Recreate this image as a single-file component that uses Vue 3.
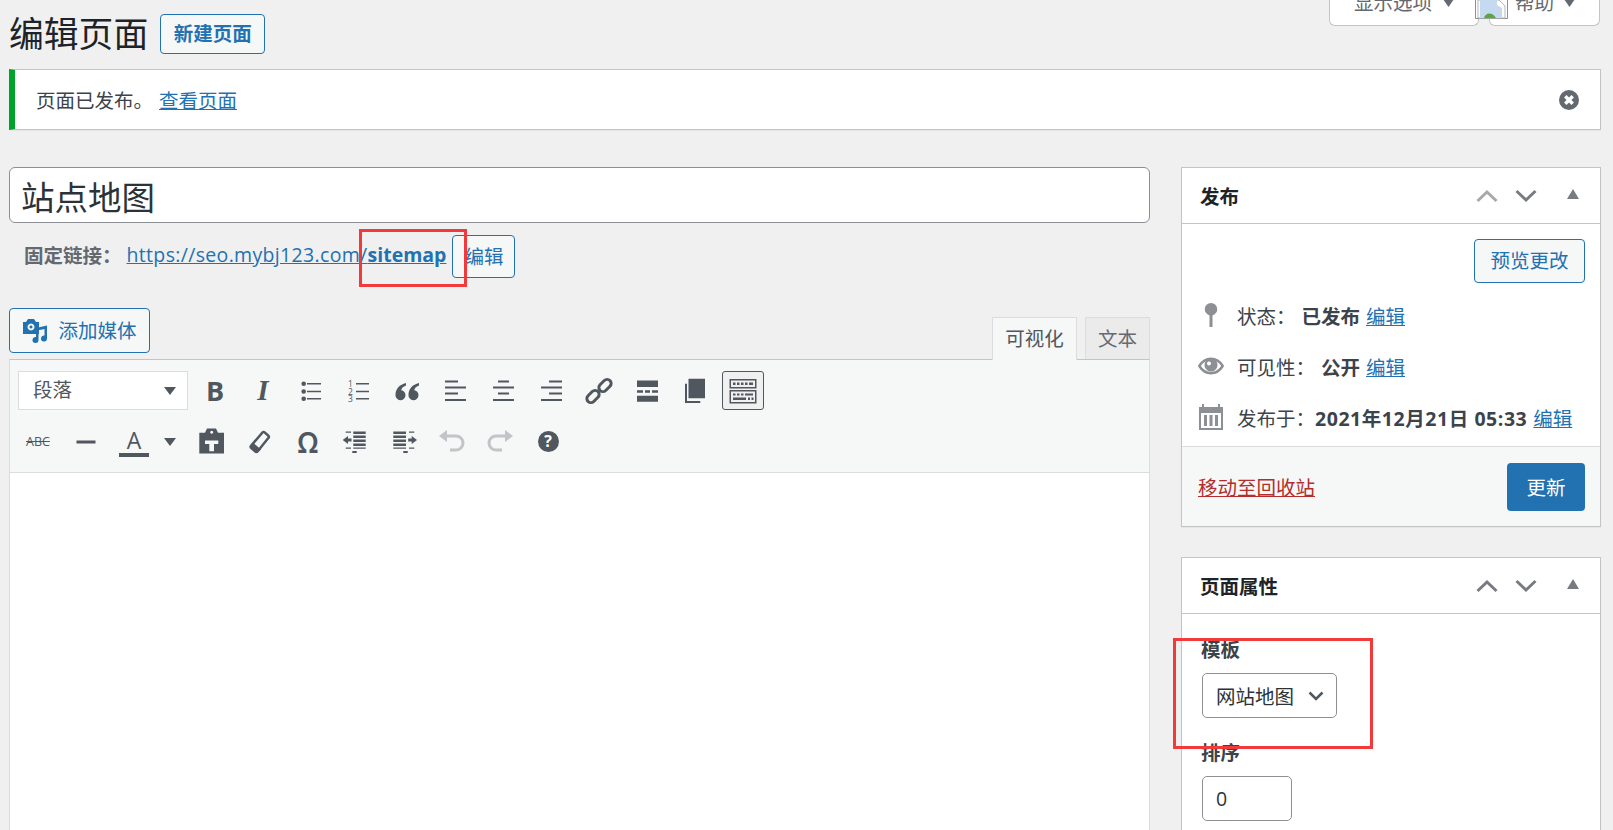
<script setup>
const statusRows = [
  { icon: 'pin', label: '状态：', value: '已发布', cls: 'val-gap' },
  { icon: 'eye', label: '可见性：', value: '公开', cls: 'val-gap' },
  { icon: 'cal', label: '发布于：', value: '2021年12月21日 05:33', cls: 'val-date' }
]
</script>

<template>
  <div class="page">
    <div class="screen-links">
      <div class="screen-tab tab-options">
        显示选项
        <svg class="tab-tri" viewBox="0 0 14 10"><path d="M0 0h14L7 10z" /></svg>
      </div>
      <div class="screen-tab tab-help">
        <svg class="broken" viewBox="0 0 33 19">
          <path class="broken-frame" d="M.5 0v18.500h32V0" />
          <path class="broken-paper" d="M3 0h21l6 6v12H3z" />
          <path class="broken-sky" d="M5 0h17v5l5 3v9H5z" />
          <path class="broken-hill" d="M9 18c1-5 8-7 12 0z" />
        </svg>
        帮助
        <svg class="tab-tri" viewBox="0 0 14 10"><path d="M0 0h14L7 10z" /></svg>
      </div>
    </div>

    <div class="head">
      <h1>编辑页面</h1>
      <a class="btn btn-new">新建页面</a>
    </div>

    <div class="notice">
      <span>页面已发布。</span>
      <a class="link notice-link">查看页面</a>
      <svg class="notice-close" viewBox="0 0 20 20">
        <circle cx="10" cy="10" r="10" />
        <path d="M6.300 6.300l7.400 7.400M13.700 6.300l-7.400 7.400" />
      </svg>
    </div>

    <div class="columns">
      <div class="main">
        <input class="title-input" value="站点地图" readonly />

        <div class="permalink">
          <b>固定链接：</b>
          <a class="link perma-url">https://seo.mybj123.com/<b>sitemap</b></a>
          <a class="btn btn-edit">编辑</a>
        </div>

        <div class="media-row">
          <a class="btn btn-media">
            <svg class="media-ico" viewBox="0 0 26 24">
              <path fill-rule="evenodd" d="M1 3h3l2-3h6l2 3h3v12H1zM9 4.500a3.500 3.500 0 1 0 .01 0zM9 6.500a1.500 1.500 0 1 1-.01 0z" />
              <path d="M14 9l11-2.500v13a3 3 0 1 1-2.500-3V10l-6 1.300V21a3 3 0 1 1-2.500-3z" />
            </svg>
            添加媒体
          </a>
          <div class="editor-tabs">
            <div class="etab etab-on">可视化</div>
            <div class="etab etab-text">文本</div>
          </div>
        </div>

        <div class="editor">
          <div class="toolbar">
            <div class="tb-row">
              <div class="format">
                <span>段落</span>
                <svg class="tri" viewBox="0 0 12 8"><path d="M0 0h12L6 8z" /></svg>
              </div>
              <div class="tb-btn"><span class="glyph-b">B</span></div>
              <div class="tb-btn"><span class="glyph-i">I</span></div>
              <div class="tb-btn">
                <svg class="ico" viewBox="0 0 30 30">
                  <circle cx="7.700" cy="7.700" r="2.300" /><circle cx="7.700" cy="15.500" r="2.300" /><circle cx="7.700" cy="22.800" r="2.300" />
                  <path d="M11 7h14v1.500H11zM11 14.700h14v1.500H11zM11 22h14v1.500H11z" />
                </svg>
              </div>
              <div class="tb-btn">
                <svg class="ico" viewBox="0 0 30 30">
                  <text x="4" y="10.500" class="ol-num">1</text><text x="4" y="18.500" class="ol-num">2</text><text x="4" y="26" class="ol-num">3</text>
                  <path d="M12 7h13v1.500H12zM12 14.700h13v1.500H12zM12 22h13v1.500H12z" />
                </svg>
              </div>
              <div class="tb-btn">
                <svg class="ico" viewBox="0 0 30 30">
                  <path d="M14 7v2.500c-3 1-4.500 3-4.800 4.700A5 5 0 1 1 3.500 19C3.500 13 7.500 8.500 14 7zM27 7v2.500c-3 1-4.500 3-4.800 4.700A5 5 0 1 1 16.500 19C16.500 13 20.500 8.500 27 7z" />
                </svg>
              </div>
              <div class="tb-btn">
                <svg class="ico" viewBox="0 0 30 30"><path d="M5 4.500h13v2H5zM5 10.500h21v2H5zM5 16.500h13v2H5zM5 23h21v2H5z" /></svg>
              </div>
              <div class="tb-btn">
                <svg class="ico" viewBox="0 0 30 30"><path d="M10 4.500h11v2H10zM5 10.500h21v2H5zM10 16.500h11v2H10zM5 23h21v2H5z" /></svg>
              </div>
              <div class="tb-btn">
                <svg class="ico" viewBox="0 0 30 30"><path d="M13 4.500h13v2H13zM5 10.500h21v2H5zM13 16.500h13v2H13zM5 23h21v2H5z" /></svg>
              </div>
              <div class="tb-btn">
                <svg class="ico" viewBox="0 0 30 30">
                  <g class="chain">
                    <rect x="2" y="16.500" width="14" height="8" rx="4" transform="rotate(-45 9 20.500)" />
                    <rect x="14" y="5.500" width="14" height="8" rx="4" transform="rotate(-45 21 9.500)" />
                  </g>
                </svg>
              </div>
              <div class="tb-btn">
                <svg class="ico" viewBox="0 0 30 30">
                  <path d="M5 4.500h21V11H5zM5 14.300h6v2.400H5zM13 14.300h5v2.400h-5zM20 14.300h6v2.400h-6zM5 19.700h21v6H5z" />
                </svg>
              </div>
              <div class="tb-btn">
                <svg class="ico" viewBox="0 0 30 30">
                  <path d="M8.500 2.700H25v19.600H8.500zM5 7.700h2V25h13.300v2H5z" />
                </svg>
              </div>
              <div class="tb-btn tb-on">
                <svg class="ico" viewBox="0 0 30 30">
                  <path fill-rule="evenodd" d="M1.500 3h27v9.500h-27zM3 4.500v6.500h24V4.500zM1.500 14h27v13.500h-27zM3 15.500V26h24V15.500z" />
                  <path d="M5 6.500h2.500v2.500H5zM9 6.500h2.500v2.500H9zM13 6.500h2.500v2.500H13zM17 6.500h2.500v2.500H17zM21 6.500h4v2.500h-4zM5 17.500h2.500v2H5zM9 17.500h2.500v2H9zM13 17.500h2.500v2H13zM17 17.500h8v2h-8zM5 21.500h13v2.500H5zM20 21.500h2v2.500h-2zM23.500 21.500h2v2.500h-2z" />
                </svg>
              </div>
            </div>

            <div class="tb-row row-2">
              <div class="tb-btn"><span class="glyph-abc">ABC</span></div>
              <div class="tb-btn">
                <svg class="ico" viewBox="0 0 30 30"><path d="M5.500 13.500h19v3h-19z" /></svg>
              </div>
              <div class="tb-btn">
                <span class="glyph-a">A</span>
              </div>
              <div class="tb-arrow">
                <svg class="tri" viewBox="0 0 12 8"><path d="M0 0h12L6 8z" /></svg>
              </div>
              <div class="tb-btn">
                <svg class="ico" viewBox="0 0 30 30">
                  <path fill-rule="evenodd" d="M2.300 5.800H8L10 1.500h9l2 4.300h6v20.700H2.300zM8 13.500V17h4.300v7.200H17V17h4.300v-3.500zM14.700 3.700a1.500 1.500 0 1 0 .01 0z" />
                </svg>
              </div>
              <div class="tb-btn">
                <svg class="ico" viewBox="0 0 30 30">
                  <path class="eraser" d="M17.500 5.500c.6-.7 1.500-.7 2.100-.1l3.800 3.400c.6.500.7 1.400.1 2L12.500 24.500c-.6.700-1.500.7-2.100.1l-4.300-3.800c-.6-.5-.7-1.400-.1-2z" />
                  <path d="M6 20l3-3.500 7 6-3.500 3-2 .3z" />
                </svg>
              </div>
              <div class="tb-btn"><span class="glyph-omega">Ω</span></div>
              <div class="tb-btn">
                <svg class="ico" viewBox="0 0 30 30">
                  <path d="M4.700 4.500H10v1.200H4.700zM12.300 4.500h12.400V7H12.300zM12.300 8.500h12.400V11H12.300zM12.300 12.500h12.400V15H12.300zM12.300 16.500h12.400V19H12.300zM12.300 20.500h12.400v1.200H12.300zM4.700 20.500H10v1.200H4.700zM11.300 24h4.400v2h-4.400zM1.700 13L7 9v2.500h3.500v3H7V17z" />
                </svg>
              </div>
              <div class="tb-btn">
                <svg class="ico" viewBox="0 0 30 30">
                  <path d="M20 4.500h5.300v1.200H20zM4.300 4.500H17V7H4.300zM4.300 8.500H17V11H4.300zM4.300 12.500H17V15H4.300zM4.300 16.500H17V19H4.300zM4.300 20.500H17v1.200H4.300zM20 20.500h5.300v1.200H20zM14.300 24h4.400v2h-4.400zM28 13l-5.300-4v2.500h-3.500v3h3.500V17z" />
                </svg>
              </div>
              <div class="tb-btn">
                <svg class="ico ico-off" viewBox="0 0 30 30">
                  <path d="M2 9l8-6v12z" /><path class="hist" d="M9 9h10a7 7 0 0 1 0 14h-6" />
                </svg>
              </div>
              <div class="tb-btn">
                <svg class="ico ico-off" viewBox="0 0 30 30">
                  <path d="M28 9l-8-6v12z" /><path class="hist" d="M21 9H11a7 7 0 0 0 0 14h6" />
                </svg>
              </div>
              <div class="tb-btn"><span class="glyph-help">?</span></div>
            </div>
          </div>
          <div class="editor-body"></div>
        </div>
      </div>

      <div class="side">
        <div class="box">
          <div class="box-head">
            <h2>发布</h2>
            <svg class="chev chev-off" viewBox="0 0 22 14"><path d="M1.500 12L11 3l9.500 9" /></svg>
            <svg class="chev" viewBox="0 0 22 14"><path d="M1.500 2l9.500 9 9.500-9" /></svg>
            <svg class="box-tri" viewBox="0 0 12 10"><path d="M6 0l6 10H0z" /></svg>
          </div>
          <div class="preview-row"><a class="btn btn-preview">预览更改</a></div>
          <div v-for="row in statusRows" :key="row.icon" class="status-row">
            <svg v-if="row.icon === 'pin'" class="st-ico" viewBox="0 0 26 26">
              <path d="M13 1a6.300 6.300 0 0 1 1.500 12.400V25h-3V13.400A6.300 6.300 0 0 1 13 1z" />
            </svg>
            <svg v-else-if="row.icon === 'eye'" class="st-ico" viewBox="0 0 26 26">
              <path class="eye-line" d="M1.300 13C3.800 9 8 5.800 13 5.800S22.200 9 24.700 13C22.200 17 18 20.200 13 20.200S3.800 17 1.300 13z" />
              <path fill-rule="evenodd" d="M13 5.500a6.500 6.500 0 1 1-.01 0zM11 8.500a2 2 0 1 0 .01 0z" />
            </svg>
            <svg v-else class="st-ico" viewBox="0 0 26 26">
              <path fill-rule="evenodd" d="M1 3h3V0h2v3h14V0h2v3h3v23H1zM3 9v15h20V9z" />
              <path d="M6 11h3v11H6zM11.500 11h3v11h-3zM17 11h3v11h-3z" />
            </svg>
            <span>{{ row.label }}</span>
            <b :class="row.cls">{{ row.value }}</b>
            <a class="link st-edit">编辑</a>
          </div>
          <div class="box-actions">
            <a class="trash">移动至回收站</a>
            <a class="btn-primary">更新</a>
          </div>
        </div>

        <div class="box box-attrs">
          <div class="box-head">
            <h2>页面属性</h2>
            <svg class="chev" viewBox="0 0 22 14"><path d="M1.500 12L11 3l9.500 9" /></svg>
            <svg class="chev" viewBox="0 0 22 14"><path d="M1.500 2l9.500 9 9.500-9" /></svg>
            <svg class="box-tri" viewBox="0 0 12 10"><path d="M6 0l6 10H0z" /></svg>
          </div>
          <div class="attrs">
            <div class="field-label">模板</div>
            <div class="tpl-select">
              网站地图
              <svg class="tpl-chev" viewBox="0 0 16 10"><path d="M1.500 1.500L8 8l6.500-6.500" /></svg>
            </div>
            <div class="field-label label-order">排序</div>
            <input class="order-input" value="0" readonly />
          </div>
        </div>
      </div>
    </div>

    <div class="mark mark-slug"></div>
    <div class="mark mark-tpl"></div>
  </div>
</template>

<style>
html,
body {
  margin: 0;
  background: #f0f0f1;
}
</style>

<style scoped>
.page {
  position: relative;
  box-sizing: border-box;
  width: 1613px;
  height: 830px;
  overflow: hidden;
  padding: 14px 12px 0 9px;
  font-family: "Open Sans", "Noto Sans CJK SC", sans-serif;
  font-size: 19.5px;
  color: #3c434a;
  background: #f0f0f1;
}

.link {
  color: #2271b1;
  text-decoration: underline;
}

.screen-links {
  float: right;
  display: flex;
  gap: 10px;
  margin: -30px 1px 0 0;
}

.screen-tab {
  box-sizing: border-box;
  display: flex;
  align-items: center;
  position: relative;
  height: 48px;
  margin-top: -6px;
  padding-top: 10px;
  padding-bottom: 8px;
  background: #fff;
  border: 1px solid #c3c4c7;
  border-top: none;
  border-radius: 0 0 6px 6px;
  color: #646970;
  line-height: 1;
}

.tab-options {
  width: 150px;
  padding-left: 24px;
}

.tab-help {
  width: 111px;
  padding-left: 25px;
}

.tab-tri {
  width: 11px;
  height: 8px;
  fill: #646970;
}

.tab-options .tab-tri {
  margin-left: 11px;
}

.tab-help .tab-tri {
  margin-left: 10px;
}

.broken {
  position: absolute;
  left: -15px;
  top: 22px;
  width: 33px;
  height: 19px;
}

.broken-frame {
  fill: none;
  stroke: #8c8f94;
}

.broken-paper {
  fill: #fff;
  stroke: #b4b6b9;
}

.broken-sky {
  fill: #c5d9f1;
}

.broken-hill {
  fill: #5aa83c;
}

.head {
  display: flex;
  align-items: center;
  height: 40px;
}

h1 {
  margin: 0;
  font-size: 34.800px;
  font-weight: 400;
  color: #1d2327;
  line-height: 40px;
}

.btn {
  box-sizing: border-box;
  display: inline-flex;
  align-items: center;
  justify-content: center;
  border: 1px solid #2271b1;
  border-radius: 4px;
  background: #f6f7f7;
  color: #2271b1;
  line-height: 1;
}

.btn-new {
  width: 105px;
  height: 40px;
  margin-left: 12px;
  font-weight: 700;
}

.notice {
  box-sizing: border-box;
  display: flex;
  align-items: center;
  height: 61px;
  margin-top: 15px;
  padding-left: 21px;
  padding-right: 21px;
  background: #fff;
  border: 1px solid #c3c4c7;
  border-left: 6px solid #00a32a;
  box-shadow: 0 1px 1px rgba(0, 0, 0, 0.04);
}

.notice-link {
  margin-left: 6px;
}

.notice-close {
  width: 20px;
  height: 20px;
  margin-left: auto;
}

.notice-close circle {
  fill: #646970;
}

.notice-close path {
  stroke: #fff;
  stroke-width: 3.500;
  fill: none;
}

.columns {
  display: grid;
  grid-template-columns: 1141px 420px;
  gap: 31px;
  margin-top: 37px;
}

.title-input {
  box-sizing: border-box;
  display: block;
  width: 100%;
  height: 56px;
  padding: 0 11px;
  border: 1px solid #8c8f94;
  border-radius: 6px;
  background: #fff;
  font-family: inherit;
  font-size: 33.500px;
  color: #2c3338;
  outline: none;
}

.permalink {
  display: flex;
  align-items: center;
  height: 43px;
  margin-top: 12px;
  padding-left: 15px;
}

.permalink > b {
  color: #646970;
  margin-bottom: 5px;
}

.perma-url {
  margin-left: 5px;
  margin-bottom: 5px;
  letter-spacing: 0.33px;
}

.perma-url b {
  letter-spacing: 0;
}

.btn-edit {
  width: 63px;
  height: 43px;
  margin-left: 6px;
}

.media-row {
  display: flex;
  justify-content: space-between;
  height: 51px;
  margin-top: 30px;
}

.btn-media {
  width: 141px;
  height: 45px;
}

.media-ico {
  width: 26px;
  height: 24px;
  margin-right: 10px;
  fill: #2271b1;
}

.editor-tabs {
  display: flex;
  align-items: flex-end;
  gap: 8px;
  position: relative;
  z-index: 1;
}

.etab {
  box-sizing: border-box;
  display: flex;
  align-items: center;
  justify-content: center;
  height: 42px;
  padding-bottom: 3px;
  background: #ebebeb;
  border: 1px solid #dcdcde;
  border-bottom: none;
  color: #646970;
}

.etab-on {
  width: 85px;
  height: 43px;
  margin-bottom: -1px;
  background: #f6f7f7;
  color: #50575e;
}

.etab-text {
  width: 65px;
}

.editor {
  border: 1px solid #dcdcde;
  border-top-color: #c3c4c7;
  border-bottom: none;
  background: #fff;
}

.toolbar {
  box-sizing: border-box;
  height: 113px;
  padding: 11px 4px 0;
  background: #f6f7f7;
  border-bottom: 1px solid #dcdcde;
}

.editor-body {
  height: 400px;
}

.tb-row {
  display: flex;
  align-items: center;
  height: 39px;
}

.row-2 {
  margin-top: 12px;
}

.format {
  box-sizing: border-box;
  display: flex;
  align-items: center;
  justify-content: space-between;
  width: 170px;
  height: 39px;
  margin: 0 3px 0 4px;
  padding: 0 11px 0 14px;
  background: #fff;
  border: 1px solid #dcdcde;
  color: #50575e;
}

.format span {
  margin-bottom: 4px;
}

.tri {
  width: 12px;
  height: 8px;
  fill: #50575e;
}

.tb-btn {
  box-sizing: border-box;
  flex: none;
  display: flex;
  align-items: center;
  justify-content: center;
  width: 42px;
  height: 39px;
  margin: 0 3px;
  border: 1px solid transparent;
  border-radius: 3px;
  color: #50575e;
}

.tb-on {
  background: #f0f0f1;
  border-color: #50575e;
}

.tb-arrow {
  flex: none;
  display: flex;
  align-items: center;
  justify-content: center;
  width: 22px;
  margin: 0 7px 0 1px;
}

.ico {
  flex: none;
  width: 30px;
  height: 30px;
  fill: #50575e;
}

.ico-off {
  fill: #c3c4c7;
}

.hist {
  fill: none;
  stroke: #c3c4c7;
  stroke-width: 3;
}

.ol-num {
  font-family: "Open Sans", sans-serif;
  font-size: 8.500px;
}

.chain rect {
  fill: none;
  stroke: #50575e;
  stroke-width: 3;
}

.eraser {
  fill: none;
  stroke: #50575e;
  stroke-width: 2.500;
}

.glyph-b {
  font-family: "Open Sans", sans-serif;
  font-size: 27px;
  font-weight: 700;
  line-height: 1;
}

.glyph-i {
  font-family: "Liberation Serif", serif;
  font-size: 29px;
  font-weight: 700;
  font-style: italic;
  line-height: 1;
}

.glyph-abc {
  font-family: "Open Sans", sans-serif;
  font-size: 12.500px;
  text-decoration: line-through;
}

.glyph-a {
  font-family: "Open Sans", sans-serif;
  font-size: 23px;
  line-height: 26px;
  width: 30px;
  text-align: center;
  border-bottom: 4px solid #50575e;
}

.glyph-omega {
  font-family: "Noto Sans", sans-serif;
  font-size: 28px;
  font-weight: 600;
  line-height: 1;
}

.glyph-help {
  width: 21px;
  height: 21px;
  border-radius: 50%;
  background: #50575e;
  color: #fff;
  font-family: "Open Sans", sans-serif;
  font-size: 16px;
  font-weight: 700;
  line-height: 21px;
  text-align: center;
}

.box {
  background: #fff;
  border: 1px solid #c3c4c7;
  box-shadow: 0 1px 1px rgba(0, 0, 0, 0.04);
}

.box-attrs {
  margin-top: 30px;
  height: 300px;
}

.box-head {
  box-sizing: border-box;
  display: flex;
  align-items: center;
  height: 56px;
  padding-left: 18px;
  border-bottom: 1px solid #c3c4c7;
}

h2 {
  margin: 0;
  font-size: 19.500px;
  font-weight: 700;
  color: #1d2327;
  margin-right: auto;
}

.chev {
  width: 22px;
  height: 14px;
  margin-right: 17px;
  fill: none;
  stroke: #787c82;
  stroke-width: 3;
}

.chev-off {
  stroke: #a7aaad;
}

.box-tri {
  width: 12px;
  height: 10px;
  margin: -4px 21px 0 13px;
  fill: #787c82;
}

.preview-row {
  display: flex;
  justify-content: flex-end;
  padding: 15px 15px 10px 0;
}

.btn-preview {
  width: 111px;
  height: 44px;
}

.status-row {
  box-sizing: border-box;
  display: flex;
  align-items: center;
  height: 51px;
  padding: 0 0 7px 16px;
  white-space: nowrap;
}

.st-ico {
  flex: none;
  width: 26px;
  height: 26px;
  margin-right: 13px;
  fill: #8c8f94;
}

.eye-line {
  fill: none;
  stroke: #8c8f94;
  stroke-width: 2.500;
}

.status-row b {
  color: #3c434a;
}

.val-gap {
  margin-left: 6px;
}

.val-date {
  letter-spacing: 0.55px;
}

.st-edit {
  margin-left: 6px;
}

.box-actions {
  box-sizing: border-box;
  display: flex;
  align-items: center;
  justify-content: space-between;
  height: 80px;
  padding: 0 15px 0 16px;
  background: #f6f7f7;
  border-top: 1px solid #dcdcde;
}

.trash {
  color: #b32d2e;
  text-decoration: underline;
}

.btn-primary {
  display: flex;
  align-items: center;
  justify-content: center;
  width: 78px;
  height: 48px;
  border-radius: 4px;
  background: #2271b1;
  color: #fff;
}

.attrs {
  padding: 24px 0 0 19px;
}

.field-label {
  font-weight: 700;
  line-height: 24px;
  color: #3c434a;
}

.label-order {
  margin-top: 23px;
}

.tpl-select {
  box-sizing: border-box;
  display: flex;
  align-items: center;
  justify-content: space-between;
  width: 135px;
  height: 45px;
  margin: 11px 0 0 1px;
  padding: 0 12px 0 13px;
  background: #fff;
  border: 1px solid #8c8f94;
  border-radius: 5px;
  color: #2c3338;
}

.tpl-chev {
  width: 16px;
  height: 10px;
  fill: none;
  stroke: #50575e;
  stroke-width: 2.500;
}

.order-input {
  box-sizing: border-box;
  display: block;
  width: 90px;
  height: 45px;
  margin: 11px 0 0 1px;
  padding: 0 13px;
  background: #fff;
  border: 1px solid #8c8f94;
  border-radius: 5px;
  font-family: inherit;
  font-size: 19.500px;
  color: #2c3338;
  outline: none;
}

.mark {
  position: absolute;
  box-sizing: border-box;
  border: 3px solid #f33a3a;
}

.mark-slug {
  left: 359px;
  top: 229px;
  width: 108px;
  height: 58px;
}

.mark-tpl {
  left: 1173px;
  top: 638px;
  width: 200px;
  height: 111px;
}
</style>
